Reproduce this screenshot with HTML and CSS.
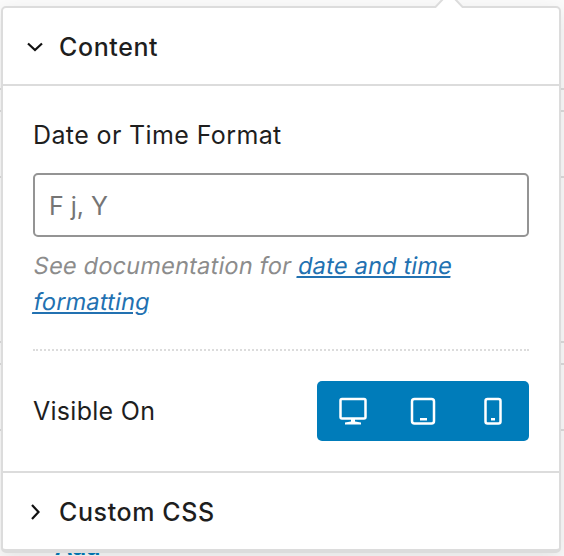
FILE: index.html
```html
<!DOCTYPE html>
<html lang="en">
<head>
<meta charset="utf-8">
<title>Block settings</title>
<link rel="stylesheet" href="styles.css">
</head>
<body>
<div class="backdrop">
  <i class="rule r1"></i><i class="rule r2"></i><i class="rule r3"></i><i class="rule r4"></i><i class="rule r5"></i><i class="rule r6"></i>
  <span class="add">Add</span>
</div>
<main class="panel">
  <svg class="pointer" width="30" height="8" viewBox="0 0 30 8"><path d="M1 8 9-1H21l8 9Z" fill="#fff"/><path d="M0 7h1.500L9-1M21-1l7.500 8H30" fill="none" stroke="#dcdcdc" stroke-width="2"/></svg>
  <h2 class="head">
    <svg width="24" height="24" viewBox="0 0 24 24"><path d="m5 8.500 7 6.500 7-6.500"/></svg>
    <span>Content</span>
  </h2>
  <section class="body">
    <label class="label" for="format">Date or Time Format</label>
    <input class="field" id="format" type="text" placeholder="F j, Y">
    <p class="help"><span class="line">See documentation for <a>date and time</a></span><span class="line"><a>formatting</a></span></p>
    <hr class="divider">
    <div class="row">
      <span class="visible">Visible On</span>
      <div class="devices">
        <svg width="28" height="28" viewBox="0 0 28 28"><rect x="1.500" y="2" width="25" height="19.500" rx="1.500"/><path class="solid" d="M12 22h4v2.500l6 1v2h-16v-2l6-1z"/></svg>
        <svg width="28" height="28" viewBox="0 0 28 28"><rect x="3" y="2" width="22" height="24.500" rx="2.500"/><path class="solid" d="M11 21h7v2.500h-7z"/></svg>
        <svg width="28" height="28" viewBox="0 0 28 28"><rect x="6.500" y="2" width="15" height="24.500" rx="2"/><path class="solid" d="M12 21h4v2.500h-4z"/></svg>
      </div>
    </div>
  </section>
  <h2 class="head">
    <svg width="24" height="24" viewBox="0 0 24 24"><path d="m9 5 6.500 7L9 19"/></svg>
    <span>Custom CSS</span>
  </h2>
</main>
</body>
</html>
```
FILE: styles.css
```css
* { box-sizing: border-box; }
body {
  margin: 0;
  height: 556px;
  overflow: hidden;
  position: relative;
  background: #fbfbfb;
  font-family: Inter, sans-serif;
  color: #1e1e1e;
}
.backdrop { position: absolute; inset: 0; }
.rule { position: absolute; left: 0; right: 0; height: 2px; background: #dcdcdc; }
.r1 { top: 88px; }
.r2 { top: 110px; }
.r3 { top: 176px; }
.r4 { top: 341px; }
.r5 { top: 363px; }
.r6 { top: 429px; }
.add { position: absolute; left: 55px; top: 533px; font-size: 24px; line-height: 28px; font-weight: 600; letter-spacing: -.8px; color: #007cba; }
.panel {
  position: relative;
  width: 560px;
  height: 547px;
  margin: 6px 0 0 1px;
  background: #fff;
  border: 2px solid #dcdcdc;
  border-bottom-width: 4px;
  border-radius: 5px;
  box-shadow: 0 6px 20px rgba(0, 0, 0, .1);
}
.pointer { position: absolute; left: 431px; top: -8px; }
.head {
  display: flex;
  align-items: center;
  gap: 12px;
  height: 76px;
  margin: 0;
  padding: 1px 0 0 20px;
  font-size: 25px;
  line-height: 36px;
  font-weight: 500;
  letter-spacing: .6px;
}
.head span { padding-top: 1px; }
.head svg { fill: none; stroke: #111; stroke-width: 2.2; }
.body {
  height: 389px;
  padding: 31px 30px 0;
  border: solid #dcdcdc;
  border-width: 2px 0;
}
.label { display: block; font-size: 25px; line-height: 36px; letter-spacing: .38px; }
.field {
  display: block;
  width: 100%;
  height: 64px;
  margin-top: 20px;
  padding: 2px 14px 0;
  border: 2px solid #949494;
  border-radius: 5px;
  background: #fff;
  font: 25px/36px Inter, sans-serif;
}
.field::placeholder { color: #757575; opacity: 1; }
.help { margin: 11px 0 0; font-size: 23.5px; line-height: 36px; letter-spacing: .22px; color: #8c8c8c; }
.line { display: block; transform: translateX(1px) skewX(-10deg); }
.help a { color: #2271b1; text-decoration: underline; text-decoration-thickness: 2px; text-underline-offset: 2px; text-decoration-skip-ink: auto; }
.divider { margin: 29px 0 30px; border: 0; border-top: 2px dotted #dcdcdc; }
.row { display: flex; align-items: center; justify-content: space-between; }
.visible { font-size: 25px; letter-spacing: .28px; }
.devices {
  display: grid;
  grid-template-columns: 72px 68px 72px;
  width: 212px;
  height: 60px;
  place-items: center;
  border-radius: 5px;
  background: #007cba;
}
.devices svg { fill: none; stroke: #fff; stroke-width: 2.5; }
.devices .solid { fill: #fff; stroke: none; }
```
